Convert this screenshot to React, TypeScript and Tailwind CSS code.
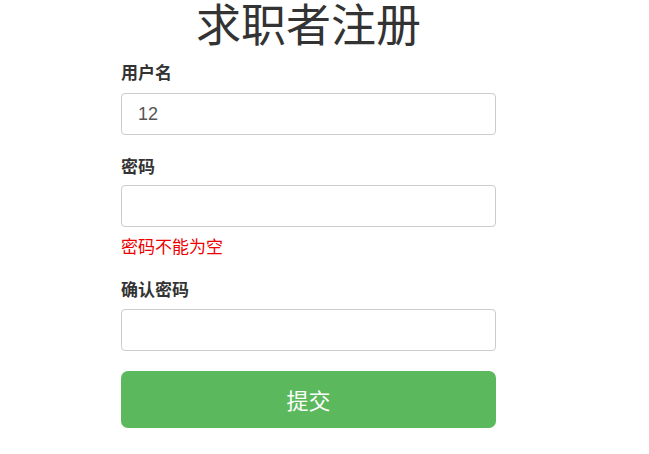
const font = { fontFamily: '"Noto Sans CJK SC", "Liberation Sans", sans-serif' };

const Field = ({
  label,
  value,
  className,
  gap,
}: {
  label: string;
  value?: string;
  className?: string;
  gap: string;
}) => (
  <div className={className}>
    <label className="block text-[17px] leading-[24px] font-bold text-[#333]">
      {label}
    </label>
    <input
      type="text"
      defaultValue={value}
      className={`${gap} block w-full h-[42px] px-[16px] font-['Liberation_Sans',sans-serif] text-[18px] text-[#555] bg-white border border-[#ccc] rounded-[4px] outline-none`}
    />
  </div>
);

export default function App() {
  return (
    <div className="w-[649px] h-[454px] bg-white" style={font}>
      <div className="ml-[121px] w-[375px]">
        <h1 className="text-center text-[45px] leading-[46px] font-normal text-[#333]">
          求职者注册
        </h1>
        <Field label="用户名" value="12" className="mt-[14px]" gap="mt-[9px]" />
        <Field label="密码" className="mt-[19px]" gap="mt-[7px]" />
        <p className="mt-[7px] text-[17px] leading-[24px] text-[#e00]">
          密码不能为空
        </p>
        <Field label="确认密码" className="mt-[19px]" gap="mt-[8px]" />
        <button
          type="button"
          className="mt-[20px] w-full h-[57px] rounded-[7px] bg-[#5cb85c] text-white text-[22px]"
        >
          提交
        </button>
      </div>
    </div>
  );
}
